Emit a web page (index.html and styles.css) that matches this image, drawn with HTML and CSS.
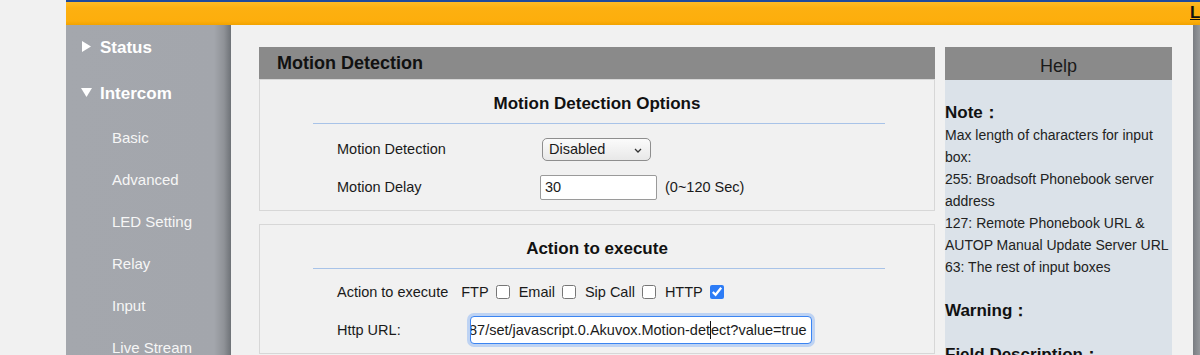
FILE: index.html
```html
<!DOCTYPE html>
<html lang="en">
<head>
    <meta charset="UTF-8">
    <title>Intercom - Motion Detection</title>
    <link rel="stylesheet" href="styles.css">
</head>
<body>

<div class="page">
    <div class="topbar"><a class="logout" href="#">Logout</a></div>

    <div class="main">
        <nav class="sidebar">
            <div class="menu-head status">
                <svg class="arrow" width="9" height="11" viewBox="0 0 9 11"><polygon points="0,0 9,5.5 0,11" fill="#fff"/></svg>
                Status
            </div>
            <div class="menu-head intercom">
                <svg class="arrow" width="11" height="9" viewBox="0 0 11 9"><polygon points="0,0 11,0 5.5,9" fill="#fff"/></svg>
                Intercom
            </div>
            <a class="menu-item" href="#">Basic</a>
            <a class="menu-item" href="#">Advanced</a>
            <a class="menu-item" href="#">LED Setting</a>
            <a class="menu-item" href="#">Relay</a>
            <a class="menu-item" href="#">Input</a>
            <a class="menu-item" href="#">Live Stream</a>
        </nav>

        <div class="content">
            <div class="panel">
                <div class="panel-head">Motion Detection</div>

                <div class="box first">
                    <div class="box-title">Motion Detection Options</div>
                    <div class="rule"></div>
                    <div class="row">
                        <label class="lbl-wide">Motion Detection</label>
                        <span class="select-wrap">
                            <select>
                                <option>Disabled</option>
                                <option>Enabled</option>
                            </select>
                            <svg class="chev" width="8" height="5" viewBox="0 0 8 5"><polyline points="1,1 4,4 7,1" fill="none" stroke="#333" stroke-width="1.3"/></svg>
                        </span>
                    </div>
                    <div class="row">
                        <label class="lbl-wide">Motion Delay</label>
                        <input class="text-small" type="text" value="30">
                        <span class="hint">(0~120 Sec)</span>
                    </div>
                </div>

                <div class="box second">
                    <div class="box-title">Action to execute</div>
                    <div class="rule"></div>
                    <div class="row">
                        <label>Action to execute</label>
                        <span class="opt first-opt">FTP</span><input type="checkbox">
                        <span class="opt">Email</span><input type="checkbox">
                        <span class="opt">Sip Call</span><input type="checkbox">
                        <span class="opt">HTTP</span><input type="checkbox" checked>
                    </div>
                    <div class="row">
                        <label class="lbl-url">Http URL:</label>
                        <div class="url-field"><span class="url-text">87/set/javascript.0.Akuvox.Motion-det<span class="caret"></span>ect?value=true</span></div>
                    </div>
                </div>
            </div>

            <aside class="help">
                <div class="help-head">Help</div>
                <div class="help-body">
                    <b>Note：</b><br>
                    Max length of characters for input box:<br>
                    255: Broadsoft Phonebook server address<br>
                    127: Remote Phonebook URL &amp; AUTOP Manual Update Server URL<br>
                    63: The rest of input boxes<br>
                    <br>
                    <b>Warning：</b><br>
                    <br>
                    <b>Field Description：</b>
                </div>
            </aside>
        </div>

        <div class="edge"></div>
    </div>
</div>

</body>
</html>
```

FILE: styles.css
```css
body {
    margin: 0;
    background-color: #f1f1f1;
    font-family: "Liberation Sans", Arial, sans-serif;
    color: #222;
    overflow: hidden;
}
.page {
    margin-left: 66px;
    width: 1134px;
}

/* top orange bar */
.topbar {
    height: 25px;
    box-sizing: border-box;
    padding-left: 1124px;
    white-space: nowrap;
    overflow: hidden;
    background: linear-gradient(#1f4a9c 0, #1f4a9c 2px, #ffbb26 2px, #fdb010 8px, #fdae0c 21px, #f2a300 25px);
}
.logout {
    font-weight: bold;
    font-size: 17px;
    line-height: 25px;
    color: #111;
}

.main {
    display: flex;
    height: 330px;
}

/* left menu */
.sidebar {
    width: 165px;
    padding-top: 12px;
    box-sizing: border-box;
    background: linear-gradient(to right, #a4a7ad 0, #a3a6ac 148px, #8f9297 158px, #6e7277 165px);
}
.menu-head {
    display: flex;
    align-items: center;
    height: 22px;
    padding-left: 16px;
    font-size: 17px;
    font-weight: bold;
    color: #fff;
}
.menu-head .arrow {
    margin-right: 9px;
}
.menu-head.status {
    margin-bottom: 24px;
}
.menu-head.status .arrow {
    margin-top: -4px;
}
.menu-head.intercom {
    margin-bottom: 22px;
}
.menu-head.intercom .arrow {
    margin-left: -1px;
    margin-right: 8px;
    margin-top: -4px;
}
.menu-item {
    display: block;
    height: 22px;
    line-height: 22px;
    margin-bottom: 20px;
    padding-left: 46px;
    font-size: 15px;
    color: #f6f6f6;
    text-decoration: none;
}

/* content */
.content {
    width: 962px;
    display: flex;
    align-items: flex-start;
    gap: 10px;
    padding: 22px 0 0 28px;
    box-sizing: border-box;
}
.panel {
    width: 676px;
}
.panel-head {
    height: 32px;
    line-height: 33px;
    padding-left: 18px;
    background-color: #8a8a8a;
    font-size: 18px;
    font-weight: bold;
    color: #111;
}
.box {
    border: 1px solid #d7d7d7;
    padding: 13px 0 8px;
}
.box.second {
    margin-top: 13px;
}
.box-title {
    text-align: center;
    font-size: 17px;
    font-weight: bold;
    line-height: 22px;
    color: #111;
}
.rule {
    height: 1px;
    background-color: #a8c3e8;
    margin: 8px 49px 10px 53px;
}
.box.second .rule {
    margin-bottom: 8px;
}
.row {
    display: flex;
    align-items: center;
    height: 30px;
    padding-left: 77px;
    font-size: 14.5px;
    color: #1a1a1a;
}
.row + .row {
    margin-top: 8px;
}
.lbl-wide {
    width: 203px;
}
.lbl-url {
    width: 133px;
}

.select-wrap {
    position: relative;
    margin-left: 2px;
}
.select-wrap select {
    appearance: none;
    width: 109px;
    height: 23px;
    padding: 0 0 0 6px;
    border: 1px solid #8e8e8e;
    border-radius: 5px;
    background: linear-gradient(#fbfbfb, #e8e8e8);
    font-family: inherit;
    font-size: 14.5px;
    color: #1a1a1a;
    display: block;
}
.select-wrap .chev {
    position: absolute;
    right: 9px;
    top: 10px;
}

.text-small {
    width: 117px;
    height: 25px;
    box-sizing: border-box;
    padding: 0 4px;
    border: 1px solid #9a9a9a;
    border-radius: 2px;
    background: #fff;
    font-family: inherit;
    font-size: 14.5px;
    color: #1a1a1a;
}
.hint {
    margin-left: 8px;
}

.opt {
    margin-left: 9px;
    margin-right: 7px;
}
.opt.first-opt {
    margin-left: 13px;
}
.row input[type="checkbox"] {
    width: 14px;
    height: 14px;
    margin: 0;
    accent-color: #2d7cf6;
}

.url-field {
    width: 342px;
    height: 28px;
    box-sizing: border-box;
    display: flex;
    align-items: center;
    overflow: hidden;
    white-space: nowrap;
    padding: 0 4px 0 2px;
    border: 1px solid #3b84f1;
    border-radius: 4px;
    background: #fff;
    box-shadow: 0 0 0 3px rgba(95, 155, 245, 0.35);
}
.url-text {
    margin-left: -4px;
}
.caret {
    display: inline-block;
    width: 1px;
    height: 18px;
    background: #111;
    vertical-align: -4px;
}

/* help column */
.help {
    width: 227px;
}
.help-head {
    height: 33px;
    line-height: 38px;
    text-align: center;
    background-color: #8a8a8a;
    font-size: 18px;
    color: #1a1a1a;
}
.help-body {
    height: 290px;
    padding-top: 22px;
    background-color: #dbe2e9;
    font-size: 14px;
    line-height: 22px;
    color: #222;
}
.help-body b {
    font-size: 17px;
    color: #111;
}

.edge {
    width: 7px;
    background: linear-gradient(to right, #7a7d82, #95989c);
}
```
